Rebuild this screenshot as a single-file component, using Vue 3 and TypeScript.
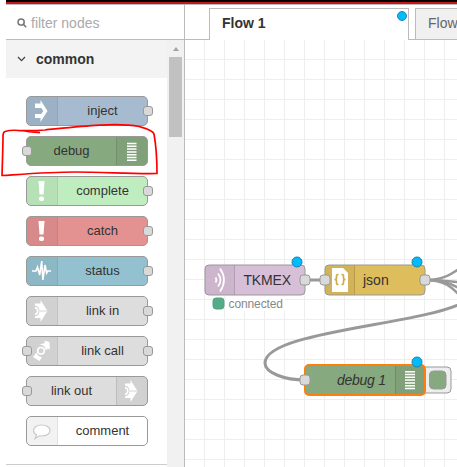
<script setup lang="ts">
interface PaletteNode {
  label: string
  color: string
  icon: string
  side: 'left' | 'right'
  input: boolean
  output: boolean
}

const nodes: PaletteNode[] = [
  { label: 'inject', color: '#a6bbcf', icon: 'inject', side: 'left', input: false, output: true },
  { label: 'debug', color: '#87a980', icon: 'debug', side: 'right', input: true, output: false },
  { label: 'complete', color: '#c0edc0', icon: 'alert', side: 'left', input: false, output: true },
  { label: 'catch', color: '#e49191', icon: 'alert', side: 'left', input: false, output: true },
  { label: 'status', color: '#94c1d0', icon: 'status', side: 'left', input: false, output: true },
  { label: 'link in', color: '#dddddd', icon: 'link', side: 'left', input: false, output: true },
  { label: 'link call', color: '#dddddd', icon: 'call', side: 'left', input: true, output: true },
  { label: 'link out', color: '#dddddd', icon: 'link', side: 'right', input: true, output: false },
  { label: 'comment', color: '#ffffff', icon: 'comment', side: 'left', input: false, output: false },
]
</script>

<template>
  <div class="editor">
    <header class="topbar"></header>
    <div class="main">
      <aside class="palette">
        <div class="search">
          <svg class="search-icon" width="10" height="10" viewBox="0 0 10 10">
            <circle cx="4.1" cy="4.1" r="3.1" /><path d="M6.4 6.4 9.2 9.2" />
          </svg>
          <span>filter nodes</span>
        </div>
        <div class="scroll">
          <div class="category">
            <div class="category-head">
              <svg width="9" height="6" viewBox="0 0 9 6"><path d="M1 1 4.5 4.6 8 1" /></svg>
              <span>common</span>
            </div>
            <div class="node-list">
              <div
                v-for="n in nodes"
                :key="n.label"
                class="node"
                :class="n.side"
                :style="{ backgroundColor: n.color }"
              >
                <div class="icon">
                  <svg width="30" height="28" viewBox="0 0 30 28">
                    <path v-if="n.icon === 'inject'" fill="#fff" d="M8 6.500h5.500V3L20.500 14 13.500 25V21H8V17h6.300l2-3-2-3H8z" />
                    <path v-else-if="n.icon === 'debug'" class="bars" d="M10 6.500h9.500M10 9.300h9.500M10 12.100h9.500M10 14.900h9.500M10 17.700h9.500M10 20.500h9.500M10 23.300h9.500" />
                    <g v-else-if="n.icon === 'alert'" fill="#fff">
                      <path d="M11.500 4h6l-1 13.500h-4z" /><rect x="12" y="19.500" width="5" height="4.500" rx="1.800" />
                    </g>
                    <path v-else-if="n.icon === 'status'" class="pulse" d="M5 14h4l1.500-4 2.200 8 2-14 1.200 19 2.100-15 1.600 8 1.200-2H24" />
                    <g v-else-if="n.icon === 'link'">
                      <path fill="#fff" d="M8 6.500h5.500V3L20.500 14 13.500 25V21H8z" />
                      <path class="gap-fill" d="M8 8.500a5.600 5.600 0 0 1 0 11z" />
                      <path class="gap-line" d="M13 14H20.500" />
                      <path class="ring" d="M8 10.500a3.600 3.600 0 0 1 0 7" />
                    </g>
                    <g v-else-if="n.icon === 'call'">
                      <path fill="#fff" d="M12 7.500 18 6l-.8-2.500L22.300 5l.7 7.500-2.200-1-2 2a6 6 0 0 0-6.800-6zM9.500 15.500a6 6 0 0 0 5.500 4.500l-2.500 4-6.500-4z" />
                      <circle class="ring" cx="14" cy="13.800" r="3.300" />
                    </g>
                    <path v-else class="bubble" d="M14.500 8c5 0 8.500 2.300 8.500 5.500S19.500 19 14.500 19l-2-.2L8 21.500l1.600-3.600C7.700 17 6.500 15.500 6.500 13.500 6.500 10.300 10 8 14.500 8z" />
                  </svg>
                </div>
                <span class="label">{{ n.label }}</span>
                <i v-if="n.input" class="port in"></i>
                <i v-if="n.output" class="port out"></i>
              </div>
            </div>
          </div>
          <div class="scrollbar"><span class="arrow"></span><span class="thumb"></span></div>
        </div>
      </aside>

      <section class="workspace">
        <nav class="tabs">
          <div class="tab active">Flow 1<i class="changed"></i></div>
          <div class="tab">Flow</div>
        </nav>
        <svg class="canvas" width="272" height="427" viewBox="185 40 272 427">
          <defs>
            <pattern id="grid" x="204" y="39" width="20" height="20" patternUnits="userSpaceOnUse">
              <path d="M.5 0V20M0 .5H20" stroke="#eee" fill="none" />
            </pattern>
          </defs>
          <rect x="185" y="40" width="272" height="427" fill="url(#grid)" />

          <g class="wires">
            <path d="M305 280H325" />
            <path class="fan" d="M425 280C443 280 450 275 462 267" />
            <path class="fan" d="M425 280C443 280 451 281 465 283" />
            <path class="fan" d="M425 280C443 280 450 283 462 290" />
            <path class="fan" d="M425 280C445 280 452 287 462 298" />
            <path d="M305 380C285 380 265 373 265 363C265 331 423 325 464 302" />
          </g>

          <g class="flow-node">
            <rect x="205" y="265" width="100" height="30" rx="4" fill="#d8bfd8" />
            <path class="shade" d="M209 265.500H234.500V294.500H209a3.500 3.500 0 0 1-3.500-3.500V269a3.500 3.500 0 0 1 3.500-3.500z" />
            <path class="divider" d="M234.500 265.500V294.500" />
            <path class="waves" d="M215.500 277.500q2 2.500 0 5M218 273.500q5 6.500 0 13M220 268.500q8 11.500 0 23" />
            <text x="243.500" y="285" textLength="47.500">TKMEX</text>
            <rect class="flow-port" x="300" y="275" width="10" height="10" rx="3" />
            <circle class="dot" cx="297" cy="262" r="5" />
          </g>
          <rect x="213" y="298" width="11" height="11" rx="3" fill="#5a8" stroke="#53a37f" />
          <rect x="226" y="297" width="59" height="14" fill="#fff" />
          <text class="status" x="228.500" y="307.500" textLength="54.500">connected</text>

          <g class="flow-node">
            <rect x="325" y="265" width="100" height="30" rx="4" fill="#debd5c" />
            <path class="shade" d="M329 265.500H354.500V294.500H329a3.500 3.500 0 0 1-3.500-3.500V269a3.500 3.500 0 0 1 3.500-3.500z" />
            <path class="divider" d="M354.500 265.500V294.500" />
            <path fill="#fff" d="M332 268H343L348 273V292H332z" />
            <path class="braces" d="M338.500 274.500c-2 0-2 .5-2 2.500s0 2.500-2 2.500c2 0 2 .5 2 2.500s0 2.500 2 2.500M341.500 274.500c2 0 2 .5 2 2.500s0 2.500 2 2.500c-2 0-2 .5-2 2.500s0 2.500-2 2.500" />
            <text x="363" y="285">json</text>
            <rect class="flow-port" x="320" y="275" width="10" height="10" rx="3" />
            <rect class="flow-port" x="420" y="275" width="10" height="10" rx="3" />
            <circle class="dot" cx="417" cy="262" r="5" />
          </g>

          <g class="flow-node">
            <rect x="419" y="367" width="32" height="26" rx="4" fill="#eee" />
            <rect x="429.500" y="371" width="16.500" height="18" rx="4" fill="#87a980" />
            <rect class="selected" x="305" y="365" width="120" height="30" rx="4" fill="#87a980" />
            <path class="shade" d="M395.500 366H421a3 3 0 0 1 3 3V391a3 3 0 0 1-3 3H395.500z" />
            <path class="divider" d="M395.500 366V394" />
            <path class="bars" d="M405 371.700h10M405 374.500h10M405 377.300h10M405 380.100h10M405 382.900h10M405 385.700h10M405 388.500h10" />
            <text class="italic" x="337" y="385" textLength="49">debug 1</text>
            <rect class="flow-port" x="300" y="375" width="10" height="10" rx="3" />
            <circle class="dot" cx="417" cy="362" r="5" />
          </g>
        </svg>
      </section>
    </div>

    <svg class="annotation" width="180" height="70" viewBox="0 120 180 70">
      <path d="M40 132.600C34 132 30 132 25 131C17 130 8 130.500 5 131.500Q3 132 3 136C3 145 2.500 160 2 175.500C25 174 50 172 75 172C105 172 130 174 157 173.500C157 160 156 145 154 134C153 130 144 128 139 126.500C115 122 75 127 45 130C32 131 23 130.500 16 130.500" />
    </svg>
  </div>
</template>

<style>
body { background: #fff; overflow: hidden; }
</style>

<style scoped>
* { box-sizing: border-box; }
.editor {
  position: relative;
  width: 457px;
  height: 467px;
  padding-left: 6px;
  overflow: hidden;
  background: #fff;
  color: #333;
  font: 14px "Liberation Sans", Arial, sans-serif;
}
.topbar { height: 4px; background: #000; border-bottom: 2px solid #c7171b; }
.main { display: flex; height: 463px; border-top: 1px solid #bbb; }
.palette { width: 179px; flex: none; border-right: 1px solid #bbb; display: flex; flex-direction: column; }
.search {
  display: flex;
  align-items: center;
  height: 35px;
  padding: 1px 0 0 11px;
  gap: 4px;
  border-bottom: 1px solid #bbb;
  color: #aaa;
  flex: none;
}
.search-icon { fill: none; stroke: #777; stroke-width: 1.5; }
.scroll { display: flex; flex: 1; min-height: 0; }
.category { width: 161px; height: 425px; border-bottom: 1px solid #ccc; }
.category-head {
  display: flex;
  align-items: center;
  gap: 10px;
  height: 38px;
  padding-left: 11px;
  background: #f3f3f3;
  font-weight: bold;
}
.category-head svg { fill: none; stroke: #444; stroke-width: 1.3; }
.node-list { display: flex; flex-direction: column; gap: 10px; padding: 18px 0 0 20px; }
.node {
  position: relative;
  display: flex;
  width: 122px;
  height: 30px;
  border: 1px solid #999;
  border-radius: 5px;
}
.node.right { flex-direction: row-reverse; }
.icon { width: 31px; background: rgba(0, 0, 0, .05); border-right: 1px solid rgba(0, 0, 0, .07); border-radius: 4px 0 0 4px; }
.right .icon { border-right: 0; border-left: 1px solid rgba(0, 0, 0, .1); border-radius: 0 4px 4px 0; }
.icon svg { display: block; }
.label { flex: 1; text-align: center; font-size: 13px; line-height: 28px; }
.bars { fill: none; stroke: #fff; stroke-width: 1.5; }
.pulse { fill: none; stroke: #fff; stroke-width: 1.6; }
.ring { fill: none; stroke: #fff; stroke-width: 1.6; }
.gap-fill { fill: #d2d2d2; }
.gap-line { stroke: #d2d2d2; stroke-width: 1; }
.bubble { fill: #fff; stroke: #c8c8c8; stroke-width: 1.2; }
.port {
  position: absolute;
  top: 9px;
  width: 10px;
  height: 10px;
  border: 1px solid #999;
  border-radius: 3px;
  background: #d9d9d9;
}
.port.in { left: -5px; }
.port.out { right: -6px; }
.scrollbar { flex: 1; display: flex; flex-direction: column; align-items: center; background: #f1f1f1; padding-top: 7px; }
.arrow { width: 0; height: 0; border: 3.500px solid transparent; border-top: 0; border-bottom: 4px solid #a3a3a3; }
.thumb { width: 13px; height: 80px; margin-top: 6px; background: #c1c1c1; }
.workspace { flex: 1; min-width: 0; display: flex; flex-direction: column; overflow: hidden; }
.tabs { display: flex; flex: none; height: 35px; padding: 3px 0 0 24px; gap: 6px; width: 420px; border-bottom: 1px solid #bbb; }
.tab {
  width: 200px;
  height: 31px;
  flex: none;
  padding-left: 12px;
  border: 1px solid #bbb;
  border-bottom: 0;
  background: #f0f0f0;
  line-height: 29px;
  color: #666;
}
.tab.active { position: relative; height: 32px; background: #fff; color: #333; font-weight: bold; }
.changed { position: absolute; top: 2px; right: 1px; width: 10px; height: 10px; border: 1px solid #2389b0; border-radius: 50%; background: #00bcff; }
.canvas { display: block; flex: none; }
.wires { fill: none; stroke: #999; stroke-width: 3; }
.wires .fan { stroke-width: 2.4; }
.flow-node > rect { stroke: #999; }
.flow-node > rect.selected { stroke: #ff7f0e; stroke-width: 2; }
.flow-node > rect.flow-port { fill: #d9d9d9; }
.flow-node text { font-size: 14px; fill: #333; }
.flow-node .italic { font-style: italic; }
.status { font-size: 12px; fill: #888; }
.shade { fill: #000; fill-opacity: .05; }
.divider { stroke: #000; stroke-opacity: .15; }
.dot { fill: #00bcff; stroke: #1b82a8; }
.waves { fill: none; stroke: #fff; stroke-width: 1.7; }
.braces { fill: none; stroke: #d1ac4d; stroke-width: 1.7; }
.annotation { position: absolute; left: 0; top: 120px; fill: none; stroke: #f00; stroke-width: 1.7; stroke-linejoin: round; }
</style>
